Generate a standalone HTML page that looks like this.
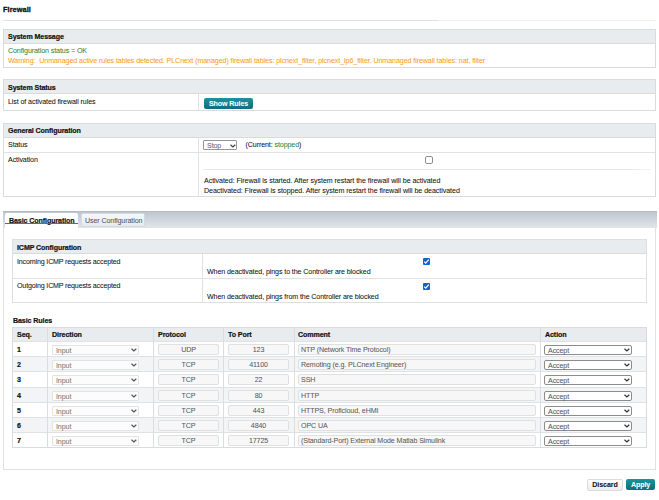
<!DOCTYPE html>
<html><head><meta charset="utf-8">
<style>
*{box-sizing:border-box;margin:0;padding:0}
html,body{width:659px;height:500px;overflow:hidden;background:#fff}
body{position:relative;font-family:"Liberation Sans",sans-serif;font-size:7.1px;letter-spacing:-0.1px;color:#111;line-height:9px;-webkit-text-stroke:0.05px}
.a{position:absolute;white-space:nowrap}
.b{font-weight:bold;letter-spacing:-0.1px;-webkit-text-stroke:0.2px}
.box{position:absolute;border:1px solid #d8dcdf;background:#fff}
.hd{position:absolute;left:0;right:0;top:0;background:#e9ecef;border-bottom:1px solid #d8dcdf}
.hl{position:absolute;height:1px;background:#dfe3e6}
.vl{position:absolute;width:1px;background:#dfe3e6}
.green{color:#1f8a34}
.orange{color:#fb9d17}
.btn{position:absolute;border-radius:2px;background:linear-gradient(#1d929e,#0d6f7a);color:#fff;font-weight:bold;text-align:center}
.sel{position:absolute;border:1px solid #959595;border-radius:1px;background:#fff;color:#666}
.chev{position:absolute;width:3px;height:3px;border-right:1px solid #333;border-bottom:1px solid #333;transform:rotate(45deg)}
.cb{position:absolute;width:7px;height:7px;border-radius:1px}
.inp{position:absolute;border:1px solid #e0e0e0;background:#f7f7f7;color:#5a5a5a;border-radius:2px}
.c{text-align:center}
.inp{line-height:11px}
.dsel{position:absolute;border:1px solid #e3e3e3;background:#fcfcfc;color:#7a7a7a;border-radius:1px;line-height:10px;padding-left:3px}
.asel{position:absolute;border:1px solid #8c8c8c;background:#fff;color:#555;border-radius:2px;line-height:10px;padding-left:3px}
.chv{position:absolute}
</style></head><body>

<div class="a b" style="left:3px;top:5px;font-size:7.3px;letter-spacing:0.1px;-webkit-text-stroke:0.3px">Firewall</div>
<div class="hl" style="left:3px;top:20px;width:435px;background:#dfe2e5"></div><div class="hl" style="left:438px;top:20px;width:218px;background:#eceef0"></div>

<!-- System Message -->
<div class="box" style="left:3px;top:29px;width:653px;height:39px">
  <div class="hd" style="height:14px"></div>
</div>
<div class="a b" style="left:8px;top:33px">System Message</div>
<div class="a green" style="left:8px;top:47px">Configuration status = OK</div>
<div class="a orange" style="left:8px;top:57px;letter-spacing:-0.08px">Warning:&nbsp; Unmanaged active rules tables detected. PLCnext (managed) firewall tables: plcnext_filter, plcnext_ip6_filter. Unmanaged firewall tables: nat, filter</div>

<!-- System Status -->
<div class="box" style="left:3px;top:79px;width:653px;height:32px">
  <div class="hd" style="height:14px"></div>
</div>
<div class="vl" style="left:198px;top:94px;height:16px"></div>
<div class="a b" style="left:8px;top:84px">System Status</div>
<div class="a" style="left:8px;top:98px">List of activated firewall rules</div>
<div class="btn" style="left:204px;top:98px;width:49px;height:11px;line-height:13px">Show Rules</div>

<!-- General Configuration -->
<div class="box" style="left:3px;top:123px;width:653px;height:74px">
  <div class="hd" style="height:14px"></div>
</div>
<div class="hl" style="left:4px;top:152px;width:651px"></div>
<div class="vl" style="left:198px;top:138px;height:58px"></div>
<div class="a b" style="left:8px;top:127px">General Configuration</div>
<div class="a" style="left:8px;top:141px">Status</div>
<div class="sel" style="left:203px;top:140px;width:34px;height:10px;line-height:10px;padding-left:3px">Stop<svg class="chv" width="6" height="4" style="left:26px;top:2.5px"><path d="M0.5 0.7 L2.9 3 L5.3 0.7" fill="none" stroke="#444" stroke-width="1.2"/></svg></div>
<div class="a" style="left:245.5px;top:141px">(Current: <span class="green">stopped</span>)</div>
<div class="a" style="left:8px;top:156px">Activation</div>
<div class="cb" style="left:425px;top:156px;width:8px;height:8px;border:1px solid #8e8e8e;border-radius:2px;background:#fff"></div>
<div class="hl" style="left:203px;top:169px;width:436px;background:#e6e8eb"></div><div class="hl" style="left:639px;top:169px;width:12px;background:#f1f2f4"></div>
<div class="a" style="left:204px;top:177px;letter-spacing:-0.06px">Activated: Firewall is started. After system restart the firewall will be activated</div>
<div class="a" style="left:204px;top:187px;letter-spacing:-0.06px">Deactivated: Firewall is stopped. After system restart the firewall will be deactivated</div>

<!-- Tabs -->
<div style="position:absolute;left:3px;top:211px;width:654px;height:17px;background:linear-gradient(#bec7cf,#e1e5e9);border-top:1px solid #b3bcc4"></div>
<div style="position:absolute;left:5px;top:213px;width:73px;height:15px;background:#fff;border-radius:2px 2px 0 0"></div>
<div class="a b" style="left:9px;top:217px">Basic Configuration</div>
<div class="hl" style="left:5px;top:223px;width:73px;background:#6a6a6a"></div>
<div style="position:absolute;left:81px;top:213px;width:64px;height:14px;background:linear-gradient(#f7f8f9,#e6e9ec);border:1px solid #d5dade;border-radius:2px 2px 0 0"></div>
<div class="a" style="left:85px;top:217px;color:#555">User Configuration</div>

<!-- Panel -->
<div style="position:absolute;left:3px;top:227px;width:653px;height:243px;border:1px solid #dfe2e5;border-top:none"></div>

<!-- ICMP -->
<div class="box" style="left:12px;top:239px;width:635px;height:64px;border-color:#dde0e3">
  <div class="hd" style="height:14px"></div>
</div>
<div class="hl" style="left:13px;top:278px;width:633px"></div>
<div class="vl" style="left:202px;top:254px;height:48px"></div>
<div class="a b" style="left:17px;top:244px">ICMP Configuration</div>
<div class="a" style="left:17px;top:258px;letter-spacing:-0.16px">Incoming ICMP requests accepted</div>
<div class="a" style="left:17px;top:282px;letter-spacing:-0.16px">Outgoing ICMP requests accepted</div>
<div class="cb" style="left:423px;top:258px;background:#0b63d4"><svg width="7" height="7" viewBox="0 0 7 7" style="position:absolute;left:0;top:0"><path d="M1.3 3.6 L2.7 5.1 L5.8 1.6" fill="none" stroke="#fff" stroke-width="1.3"/></svg></div>
<div class="cb" style="left:423px;top:283px;background:#0b63d4"><svg width="7" height="7" viewBox="0 0 7 7" style="position:absolute;left:0;top:0"><path d="M1.3 3.6 L2.7 5.1 L5.8 1.6" fill="none" stroke="#fff" stroke-width="1.3"/></svg></div>
<div class="a" style="left:207px;top:268px">When deactivated, pings to the Controller are blocked</div>
<div class="a" style="left:207px;top:293px">When deactivated, pings from the Controller are blocked</div>

<!-- Basic Rules -->
<div class="a b" style="left:13px;top:317px">Basic Rules</div>
<!--TBL-->
<div style="position:absolute;left:12px;top:327px;width:635px;height:121px;border:1px solid #d8dcdf;background:#fff"></div>
<div style="position:absolute;left:13px;top:328px;width:633px;height:13px;background:#e9ecef"></div>
<div class="hl" style="left:13px;top:341px;width:633px;background:#dfe2e5"></div>
<div style="position:absolute;left:13px;top:357px;width:633px;height:14px;background:#f3f4f6"></div>
<div class="hl" style="left:13px;top:356px;width:633px;background:#dfe2e5"></div>
<div class="hl" style="left:13px;top:371px;width:633px;background:#dfe2e5"></div>
<div style="position:absolute;left:13px;top:388px;width:633px;height:14px;background:#f3f4f6"></div>
<div class="hl" style="left:13px;top:387px;width:633px;background:#dfe2e5"></div>
<div class="hl" style="left:13px;top:402px;width:633px;background:#dfe2e5"></div>
<div style="position:absolute;left:13px;top:418px;width:633px;height:14px;background:#f3f4f6"></div>
<div class="hl" style="left:13px;top:417px;width:633px;background:#dfe2e5"></div>
<div class="hl" style="left:13px;top:432px;width:633px;background:#dfe2e5"></div>
<div class="vl" style="left:47px;top:328px;height:119px;background:#dadee1"></div>
<div class="vl" style="left:153px;top:328px;height:119px;background:#dadee1"></div>
<div class="vl" style="left:223px;top:328px;height:119px;background:#dadee1"></div>
<div class="vl" style="left:294px;top:328px;height:119px;background:#dadee1"></div>
<div class="vl" style="left:540px;top:328px;height:119px;background:#dadee1"></div>
<div class="a b" style="left:17px;top:331px">Seq.</div>
<div class="a b" style="left:52px;top:331px">Direction</div>
<div class="a b" style="left:158px;top:331px">Protocol</div>
<div class="a b" style="left:228px;top:331px">To Port</div>
<div class="a b" style="left:298px;top:331px">Comment</div>
<div class="a b" style="left:545px;top:331px">Action</div>
<div class="a b" style="left:17px;top:346px">1</div>
<div class="dsel" style="left:52px;top:345px;width:87px;height:10px">Input<svg class="chv" width="6" height="4" style="left:78px;top:2px"><path d="M0.5 0.7 L2.9 3 L5.3 0.7" fill="none" stroke="#555" stroke-width="1.2"/></svg></div>
<div class="inp c" style="left:158px;top:344px;width:61px;height:11px">UDP</div>
<div class="inp c" style="left:228px;top:344px;width:61px;height:11px">123</div>
<div class="inp" style="left:298px;top:344px;width:238px;height:11px;padding-left:2px">NTP (Network Time Protocol)</div>
<div class="asel" style="left:544px;top:345px;width:88px;height:10px">Accept<svg class="chv" width="6" height="4" style="left:78.5px;top:2px"><path d="M0.5 0.7 L2.9 3 L5.3 0.7" fill="none" stroke="#333" stroke-width="1.2"/></svg></div>
<div class="a b" style="left:17px;top:361px">2</div>
<div class="dsel" style="left:52px;top:360px;width:87px;height:10px">Input<svg class="chv" width="6" height="4" style="left:78px;top:2px"><path d="M0.5 0.7 L2.9 3 L5.3 0.7" fill="none" stroke="#555" stroke-width="1.2"/></svg></div>
<div class="inp c" style="left:158px;top:359px;width:61px;height:11px">TCP</div>
<div class="inp c" style="left:228px;top:359px;width:61px;height:11px">41100</div>
<div class="inp" style="left:298px;top:359px;width:238px;height:11px;padding-left:2px">Remoting (e.g. PLCnext Engineer)</div>
<div class="asel" style="left:544px;top:360px;width:88px;height:10px">Accept<svg class="chv" width="6" height="4" style="left:78.5px;top:2px"><path d="M0.5 0.7 L2.9 3 L5.3 0.7" fill="none" stroke="#333" stroke-width="1.2"/></svg></div>
<div class="a b" style="left:17px;top:376px">3</div>
<div class="dsel" style="left:52px;top:375px;width:87px;height:10px">Input<svg class="chv" width="6" height="4" style="left:78px;top:2px"><path d="M0.5 0.7 L2.9 3 L5.3 0.7" fill="none" stroke="#555" stroke-width="1.2"/></svg></div>
<div class="inp c" style="left:158px;top:374px;width:61px;height:11px">TCP</div>
<div class="inp c" style="left:228px;top:374px;width:61px;height:11px">22</div>
<div class="inp" style="left:298px;top:374px;width:238px;height:11px;padding-left:2px">SSH</div>
<div class="asel" style="left:544px;top:375px;width:88px;height:10px">Accept<svg class="chv" width="6" height="4" style="left:78.5px;top:2px"><path d="M0.5 0.7 L2.9 3 L5.3 0.7" fill="none" stroke="#333" stroke-width="1.2"/></svg></div>
<div class="a b" style="left:17px;top:392px">4</div>
<div class="dsel" style="left:52px;top:391px;width:87px;height:10px">Input<svg class="chv" width="6" height="4" style="left:78px;top:2px"><path d="M0.5 0.7 L2.9 3 L5.3 0.7" fill="none" stroke="#555" stroke-width="1.2"/></svg></div>
<div class="inp c" style="left:158px;top:390px;width:61px;height:11px">TCP</div>
<div class="inp c" style="left:228px;top:390px;width:61px;height:11px">80</div>
<div class="inp" style="left:298px;top:390px;width:238px;height:11px;padding-left:2px">HTTP</div>
<div class="asel" style="left:544px;top:391px;width:88px;height:10px">Accept<svg class="chv" width="6" height="4" style="left:78.5px;top:2px"><path d="M0.5 0.7 L2.9 3 L5.3 0.7" fill="none" stroke="#333" stroke-width="1.2"/></svg></div>
<div class="a b" style="left:17px;top:407px">5</div>
<div class="dsel" style="left:52px;top:406px;width:87px;height:10px">Input<svg class="chv" width="6" height="4" style="left:78px;top:2px"><path d="M0.5 0.7 L2.9 3 L5.3 0.7" fill="none" stroke="#555" stroke-width="1.2"/></svg></div>
<div class="inp c" style="left:158px;top:405px;width:61px;height:11px">TCP</div>
<div class="inp c" style="left:228px;top:405px;width:61px;height:11px">443</div>
<div class="inp" style="left:298px;top:405px;width:238px;height:11px;padding-left:2px">HTTPS, Proficloud, eHMI</div>
<div class="asel" style="left:544px;top:406px;width:88px;height:10px">Accept<svg class="chv" width="6" height="4" style="left:78.5px;top:2px"><path d="M0.5 0.7 L2.9 3 L5.3 0.7" fill="none" stroke="#333" stroke-width="1.2"/></svg></div>
<div class="a b" style="left:17px;top:422px">6</div>
<div class="dsel" style="left:52px;top:421px;width:87px;height:10px">Input<svg class="chv" width="6" height="4" style="left:78px;top:2px"><path d="M0.5 0.7 L2.9 3 L5.3 0.7" fill="none" stroke="#555" stroke-width="1.2"/></svg></div>
<div class="inp c" style="left:158px;top:420px;width:61px;height:11px">TCP</div>
<div class="inp c" style="left:228px;top:420px;width:61px;height:11px">4840</div>
<div class="inp" style="left:298px;top:420px;width:238px;height:11px;padding-left:2px">OPC UA</div>
<div class="asel" style="left:544px;top:421px;width:88px;height:10px">Accept<svg class="chv" width="6" height="4" style="left:78.5px;top:2px"><path d="M0.5 0.7 L2.9 3 L5.3 0.7" fill="none" stroke="#333" stroke-width="1.2"/></svg></div>
<div class="a b" style="left:17px;top:437px">7</div>
<div class="dsel" style="left:52px;top:436px;width:87px;height:10px">Input<svg class="chv" width="6" height="4" style="left:78px;top:2px"><path d="M0.5 0.7 L2.9 3 L5.3 0.7" fill="none" stroke="#555" stroke-width="1.2"/></svg></div>
<div class="inp c" style="left:158px;top:435px;width:61px;height:11px">TCP</div>
<div class="inp c" style="left:228px;top:435px;width:61px;height:11px">17725</div>
<div class="inp" style="left:298px;top:435px;width:238px;height:11px;padding-left:2px">(Standard-Port) External Mode Matlab Simulink</div>
<div class="asel" style="left:544px;top:436px;width:88px;height:10px">Accept<svg class="chv" width="6" height="4" style="left:78.5px;top:2px"><path d="M0.5 0.7 L2.9 3 L5.3 0.7" fill="none" stroke="#333" stroke-width="1.2"/></svg></div>
<!--/TBL-->

<!-- Buttons -->
<div style="position:absolute;left:587px;top:479px;width:36px;height:12px;border:1px solid #dcdcdc;border-radius:2px;background:linear-gradient(#fff,#ececec);font-weight:bold;text-align:center;line-height:10px">Discard</div>
<div class="btn" style="left:626px;top:479px;width:29px;height:11px;line-height:13px">Apply</div>

</body></html>
